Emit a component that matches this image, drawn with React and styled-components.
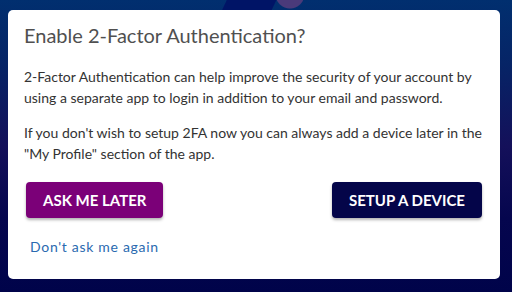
import React from 'react'
import styled, { createGlobalStyle } from 'styled-components'

const GlobalStyle = createGlobalStyle`
  html, body {
    margin: 0;
    padding: 0;
  }
  body {
    font-family: Lato, "Open Sans", sans-serif;
    background: #00064a;
  }
`

const Page = styled.div`
  width: 512px;
  height: 292px;
  box-sizing: border-box;
  padding: 10px 12px 0 8px;
  background:
    radial-gradient(circle at 290px -6px, #4a3a7a 0 14px, transparent 15px),
    linear-gradient(115deg, transparent 0 205px, #001466 206px 250px, transparent 251px) 0 0 / 100% 10px no-repeat,
    radial-gradient(60% 45% at 50% 55%, rgba(60, 10, 110, 0.55), transparent 70%),
    linear-gradient(180deg, #012f6f 0%, #062466 22%, #14105a 50%, #05064e 75%, #00034a 100%);
  overflow: hidden;
`

const Card = styled.div`
  background: #fff;
  border-radius: 5px;
  height: 269px;
  box-sizing: border-box;
  padding: 13px 16px 0 16px;
  display: flex;
  flex-direction: column;
`

const Title = styled.h2`
  margin: 0;
  font-size: 20px;
  line-height: 24px;
  font-weight: 400;
  color: #505050;
`

const Body = styled.div`
  margin-top: 19px;
  color: #333;
  font-size: 14px;
  line-height: 21px;

  p {
    margin: 0 0 14px;
  }
  p:last-child {
    margin-bottom: 0;
  }
`

const Actions = styled.div`
  display: flex;
  justify-content: space-between;
  margin: 18px 2px 0;
  width: 456px;
`

const Button = styled.button`
  height: 36px;
  padding: 0 17px;
  border: none;
  border-radius: 4px;
  background: ${(p) => (p.$primary ? '#040549' : '#7b0078')};
  color: #fff;
  font-family: Lato, sans-serif;
  font-weight: 700;
  font-size: 15px;
  text-transform: uppercase;
  box-shadow: 0 2px 3px rgba(0, 0, 0, 0.3);
  cursor: pointer;
`

const TextLink = styled.a`
  margin: 20px 0 0 6px;
  align-self: flex-start;
  color: #2a6ab0;
  font-size: 14px;
  letter-spacing: 0.7px;
  text-decoration: none;
  cursor: pointer;
`

export default function App() {
  return (
    <>
      <GlobalStyle />
      <Page>
        <Card>
          <Title>Enable 2-Factor Authentication?</Title>
          <Body>
            <p>
              2-Factor Authentication can help improve the security of your account by using a
              separate app to login in addition to your email and password.
            </p>
            <p>
              If you don't wish to setup 2FA now you can always add a device later in the "My
              Profile" section of the app.
            </p>
          </Body>
          <Actions>
            <Button>Ask me later</Button>
            <Button $primary>Setup a device</Button>
          </Actions>
          <TextLink>Don't ask me again</TextLink>
        </Card>
      </Page>
    </>
  )
}
